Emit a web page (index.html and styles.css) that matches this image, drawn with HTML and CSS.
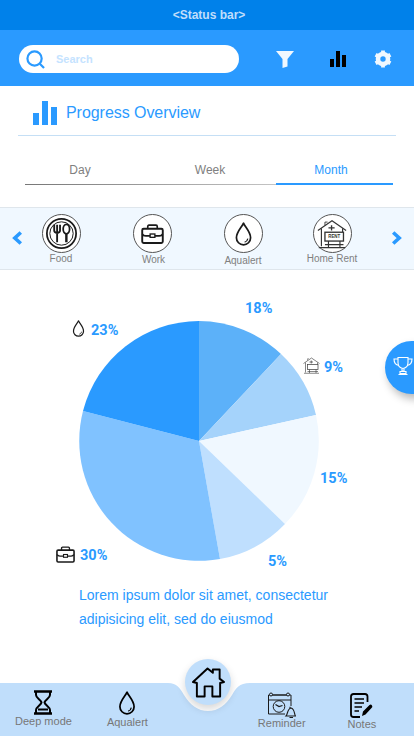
FILE: index.html
```html
<!DOCTYPE html>
<html lang="en">
<head>
<meta charset="utf-8">
<title>Progress Overview</title>
<link rel="stylesheet" href="styles.css">
</head>
<body>
<svg class="defs" width="0" height="0" aria-hidden="true">
  <symbol id="i-drop" viewBox="1.500 0.500 21 30.500">
    <path d="M12 2C10 7 3 13 3 20.500A9 9 0 0 0 21 20.500C21 13 14 7 12 2Z" fill="none" stroke="currentColor" stroke-width="2.200" stroke-linejoin="round"/>
    <path d="M17.500 21.500C17 24 15.500 25.500 13.500 26" fill="none" stroke="currentColor" stroke-width="1.500"/>
  </symbol>
  <symbol id="i-case" viewBox="0 0 24 21">
    <rect x="1.200" y="5" width="21.600" height="15" rx="1.500" fill="none" stroke="currentColor" stroke-width="2"/>
    <path d="M7 5V2.500Q7 1.200 8.300 1.200H15.700Q17 1.200 17 2.500V5" fill="none" stroke="currentColor" stroke-width="1.700"/>
    <path d="M1.500 10.500Q2 12.500 5 12.500H9.500M14.500 12.500H19Q22 12.500 22.500 10.500" fill="none" stroke="currentColor" stroke-width="1.700"/>
    <rect x="9.500" y="10.500" width="5" height="3.500" fill="none" stroke="currentColor" stroke-width="1.400"/>
  </symbol>
  <symbol id="i-rent" viewBox="0 0 34 34">
    <path d="M1 13L17 2L33 13M5 11V31M29 11V15" fill="none" stroke="currentColor" stroke-width="1.300"/>
    <path d="M9 7V3.500H12" fill="none" stroke="currentColor" stroke-width="1"/>
    <path d="M13 10H20M16.500 7V13" fill="none" stroke="currentColor" stroke-width="1.500"/>
    <rect x="9" y="15" width="21" height="10" fill="#fff" stroke="currentColor" stroke-width="1.500"/>
    <path d="M13 25V32M26 25V32M9 29H30M2 32.500H32" fill="none" stroke="currentColor" stroke-width="1.300"/>
  </symbol>
</svg>

<div class="page">
  <div class="status">&lt;Status bar&gt;</div>

  <header class="topbar">
    <div class="search">
      <svg class="search-icon" viewBox="0 0 20 20"><circle cx="9" cy="9" r="7.500" fill="none" stroke="#2a9aff" stroke-width="2.300"/><path d="M14.500 14.500L19 19" stroke="#2a9aff" stroke-width="2.300"/></svg>
      <span class="search-text">Search</span>
    </div>
    <svg class="filter-icon" viewBox="0 0 18 17"><path d="M0 0H18L11.500 8V15.500L6.500 17V8Z" fill="#f0f8ff"/></svg>
    <svg class="bars-icon" viewBox="0 0 16 16"><path d="M0 8H4V16H0ZM6 0H10V16H6ZM12 4H16V16H12Z" fill="#000"/></svg>
    <svg class="gear-icon" viewBox="0 0 18 18">
      <circle cx="9" cy="9" r="5" fill="none" stroke="#f0f8ff" stroke-width="4.600"/>
      <path d="M9 0.500V4M9 14V17.500M1.600 4.750L4.700 6.500M13.300 11.500L16.400 13.250M1.600 13.250L4.700 11.500M13.300 6.500L16.400 4.750" stroke="#f0f8ff" stroke-width="3.800"/>
    </svg>
  </header>

  <section class="heading">
    <svg class="heading-icon" viewBox="0 0 24 24"><path d="M0 12H6V24H0ZM9 0H15V24H9ZM18 6H24V24H18Z" fill="#2a9aff"/></svg>
    <h1 class="heading-text">Progress Overview</h1>
  </section>

  <nav class="tabs">
    <span class="tab tab-day">Day</span>
    <span class="tab tab-week">Week</span>
    <span class="tab tab-month">Month</span>
  </nav>

  <section class="carousel">
    <svg class="chev" viewBox="0 0 11 14"><path d="M8.800 1.500L2.800 7L8.800 12.500" fill="none" stroke="#2a9aff" stroke-width="3.600"/></svg>
    <div class="cats">
      <div class="cat">
        <span class="disc">
          <svg class="disc-icon" viewBox="0 0 38 38">
            <circle cx="19" cy="19" r="15" fill="none" stroke="#1a1a1a" stroke-width="1.800"/>
            <circle cx="19" cy="19" r="12" fill="none" stroke="#1a1a1a" stroke-width="1"/>
            <path d="M11.500 10V16Q11.500 18 14.500 18.500Q17.500 18 17.500 16V10M14.500 10V28" fill="none" stroke="#1a1a1a" stroke-width="1.900"/>
            <ellipse cx="24" cy="14.500" rx="3.300" ry="4.800" fill="none" stroke="#1a1a1a" stroke-width="1.800"/>
            <path d="M24 19V28" stroke="#1a1a1a" stroke-width="2.500"/>
          </svg>
        </span>
        <span class="cat-label">Food</span>
      </div>
      <div class="cat">
        <span class="disc"><svg class="disc-case"><use href="#i-case"/></svg></span>
        <span class="cat-label cat-label-low">Work</span>
      </div>
      <div class="cat">
        <span class="disc"><svg class="disc-drop"><use href="#i-drop"/></svg></span>
        <span class="cat-label cat-label-lower">Aqualert</span>
      </div>
      <div class="cat cat-home">
        <span class="disc">
          <svg class="disc-rent" viewBox="0 0 34 34">
            <use href="#i-rent"/>
            <text class="rent-word" x="19.500" y="22">RENT</text>
          </svg>
        </span>
        <span class="cat-label">Home Rent</span>
      </div>
    </div>
    <svg class="chev chev-next" viewBox="0 0 11 14"><path d="M2.200 1.500L8.200 7L2.200 12.500" fill="none" stroke="#2a9aff" stroke-width="3.600"/></svg>
  </section>

  <section class="chart">
    <svg class="pie" width="414" height="310" viewBox="0 0 414 310">
      <path d="M199 171V51A120 120 0 0 1 281 84Z" fill="#5cb1f9"/>
      <path d="M199 171L281 84A120 120 0 0 1 316 145Z" fill="#a5d3fb"/>
      <path d="M199 171L316 145A120 120 0 0 1 285 254Z" fill="#f0f8ff"/>
      <path d="M199 171L285 254A120 120 0 0 1 220 289Z" fill="#bfdffe"/>
      <path d="M199 171L220 289A120 120 0 0 1 83 141Z" fill="#80c2ff"/>
      <path d="M199 171L83 141A120 120 0 0 1 199 51Z" fill="#2a9aff"/>
    </svg>
    <span class="pct pct-18">18%</span>
    <svg class="mark mark-drop"><use href="#i-drop"/></svg>
    <span class="pct pct-23">23%</span>
    <svg class="mark mark-rent"><use href="#i-rent"/></svg>
    <span class="pct pct-9">9%</span>
    <span class="pct pct-15">15%</span>
    <span class="pct pct-5">5%</span>
    <svg class="mark mark-case"><use href="#i-case"/></svg>
    <span class="pct pct-30">30%</span>
  </section>

  <p class="lorem">Lorem ipsum dolor sit amet, consectetur<br>adipisicing elit, sed do eiusmod</p>

  <button class="award" type="button" aria-label="Awards">
    <svg class="award-icon" viewBox="0 0 20 20">
      <path d="M5 1.500H15V6.500C15 10 13 12 10 12.500C7 12 5 10 5 6.500Z" fill="none" stroke="#fff" stroke-width="1.100"/>
      <path d="M5 3H1C1 7 2.500 9 6 9.500M15 3H19C19 7 17.500 9 14 9.500" fill="none" stroke="#fff" stroke-width="1.100"/>
      <path d="M9 12.500V15H11V12.500M7 15.500H13V17.500H7ZM5.500 18.500H14.500" fill="none" stroke="#fff" stroke-width="1.100"/>
    </svg>
  </button>

  <footer class="bottom">
    <svg class="bottom-bg" viewBox="0 0 414 53" preserveAspectRatio="none"><path d="M0 0H168C177 0 180 5 184 12C190 22 198 28 208 28C218 28 226 22 232 12C236 5 239 0 250 0H414V53H0Z" fill="#c0defb"/></svg>
    <div class="tool tool-deep">
      <svg class="tool-hour" viewBox="0 0 20 25">
        <path d="M1 1.500H19M1 23.500H19" stroke="#000" stroke-width="2.400"/>
        <path d="M3 2V5C3 8 8 10 8.500 12.500C8 15 3 17 3 20V23M17 2V5C17 8 12 10 11.500 12.500C12 15 17 17 17 20V23M5 19.500H15" fill="none" stroke="#000" stroke-width="2"/>
      </svg>
      <span class="tool-label">Deep mode</span>
    </div>
    <div class="tool tool-aqua">
      <svg class="tool-drop"><use href="#i-drop"/></svg>
      <span class="tool-label tool-label-gap">Aqualert</span>
    </div>
    <div class="tool tool-remind">
      <svg class="tool-cal" viewBox="0 0 29 27">
        <path d="M18 22H1.500V3H24V14M1.500 8H24M4 3H20" fill="none" stroke="#1a1a1a" stroke-width="1"/>
        <circle cx="4" cy="2.500" r="1.500" fill="#c0defb" stroke="#1a1a1a"/>
        <circle cx="21" cy="2.500" r="1.500" fill="#c0defb" stroke="#1a1a1a"/>
        <circle cx="12" cy="14.500" r="5.800" fill="none" stroke="#1a1a1a" stroke-width="1"/>
        <path d="M8.500 12.500L12 14.500L15.500 13.500" fill="none" stroke="#1a1a1a" stroke-width="1.200"/>
        <path d="M19 24C21 22 20 17 24 16C28 17 27 22 28.500 24ZM23 16V14.800M22.500 25.500H26" fill="#c0defb" stroke="#1a1a1a" stroke-width="1.100"/>
      </svg>
      <span class="tool-label tool-label-tight">Reminder</span>
    </div>
    <div class="tool tool-notes">
      <svg class="tool-note" viewBox="0 0 23 25">
        <path d="M17.500 9V3.500Q17.500 1 15 1H3.500Q1 1 1 3.500V21.500Q1 24 3.500 24H10" fill="none" stroke="#000" stroke-width="1.800"/>
        <path d="M4.500 6H14M4.500 10H14M4.500 14H12M4.500 18H9" stroke="#000" stroke-width="1.300"/>
        <path d="M12 23L13 18.500L19.500 12Q21 11 22 12.500Q23 14 21.500 15L15.500 21.500Z" fill="#000"/>
      </svg>
      <span class="tool-label">Notes</span>
    </div>
    <button class="home" type="button" aria-label="Home">
      <svg class="home-icon" viewBox="0 0 34 32">
        <path d="M1 15.500L16 1.500L21.500 6V2.500H28.500V12L33 15.500L29 16.500V30.500H21V20H13V30.500H5V16.500Z" fill="none" stroke="#000" stroke-width="2" stroke-linejoin="round"/>
      </svg>
    </button>
  </footer>
</div>
</body>
</html>
```

FILE: styles.css
```css
* { box-sizing: border-box; }
html, body { margin: 0; padding: 0; background: #fff; }
.defs { position: absolute; }
.page {
  position: relative;
  width: 414px;
  height: 736px;
  overflow: hidden;
  display: flex;
  flex-direction: column;
  font-family: "Liberation Sans", Arial, sans-serif;
  background: #fff;
}

.status {
  height: 30px;
  display: flex;
  align-items: center;
  justify-content: center;
  padding-left: 4px;
  background: #0081ea;
  color: #c0defb;
  font-size: 12px;
  font-weight: 700;
}

.topbar {
  height: 56px;
  display: flex;
  align-items: center;
  padding: 2px 0 0 19px;
  background: #2a9aff;
}
.search {
  width: 220px;
  height: 28px;
  display: flex;
  align-items: center;
  padding-left: 7px;
  border-radius: 14px;
  background: #fff;
}
.search-icon { width: 19px; height: 19px; }
.search-text {
  margin-left: 11px;
  color: #c5e3ff;
  font-size: 11px;
  font-weight: 700;
}
.filter-icon { width: 18px; height: 17px; margin-left: 37px; }
.bars-icon { width: 16px; height: 16px; margin-left: 36px; }
.gear-icon { width: 18px; height: 18px; margin-left: 28px; }

.heading {
  height: 50px;
  margin: 0 18px;
  display: flex;
  align-items: center;
  padding: 4px 0 0 15px;
  border-bottom: 1px solid #c5dff5;
}
.heading-icon { width: 24px; height: 24px; }
.heading-text {
  margin: 0 0 0 9px;
  color: #2a9aff;
  font-size: 16px;
  font-weight: 400;
  letter-spacing: -.05px;
}

.tabs {
  width: 368px;
  height: 26px;
  margin: 23px 0 0 25px;
  display: flex;
  font-size: 12px;
  background: linear-gradient(90deg, #777, #c4c4c4) left bottom / 251px 1px no-repeat;
  color: #808080;
}
.tab { display: block; text-align: center; line-height: 23px; }
.tab-day { width: 110px; }
.tab-week { width: 141px; padding-left: 9px; }
.tab-month {
  width: 117px;
  padding-right: 7px;
  color: #2a9aff;
  border-bottom: 2px solid #2a9aff;
}

.carousel {
  height: 63px;
  margin-top: 22px;
  display: flex;
  align-items: flex-start;
  padding: 0 12px;
  background: #f0f8ff;
  border-top: 1px solid #dfe6ec;
  border-bottom: 1px solid #dfe6ec;
}
.chev { width: 11px; height: 14px; margin-top: 23px; flex: none; }
.chev-next { margin-left: auto; }
.cats { display: flex; margin-left: 8px; gap: 31px; }
.cat {
  width: 60px;
  display: flex;
  flex-direction: column;
  align-items: center;
  padding-top: 6px;
}
.cat-home { margin-left: -2px; }
.disc {
  width: 39px;
  height: 39px;
  display: flex;
  align-items: center;
  justify-content: center;
  border: 1px solid #555;
  border-radius: 50%;
  background: #fff;
  color: #1a1a1a;
}
.disc-icon { width: 37px; height: 37px; }
.disc-case { width: 23px; height: 20px; }
.disc-drop { width: 17px; height: 24px; }
.disc-rent { width: 30px; height: 30px; color: #333; }
.rent-word { font: 700 5px "Liberation Sans", sans-serif; fill: #333; text-anchor: middle; }
.cat-label {
  color: #808080;
  font-size: 10px;
  line-height: 12px;
  white-space: nowrap;
}
.cat-label-low { margin-top: 1px; padding-left: 3px; }
.cat-label-lower { margin-top: 2px; }

.chart { position: relative; height: 310px; flex: none; }
.pie { display: block; }
.pct {
  position: absolute;
  color: #2a9aff;
  font-family: Roboto, "Liberation Sans", sans-serif;
  font-size: 14.500px;
  font-weight: 700;
  line-height: 18px;
}
.pct-18 { left: 245px; top: 30px; }
.pct-23 { left: 91px; top: 52px; }
.pct-9 { left: 324px; top: 89px; }
.pct-15 { left: 320px; top: 200px; }
.pct-5 { left: 268px; top: 283px; }
.pct-30 { left: 80px; top: 277px; }
.mark { position: absolute; color: #1a1a1a; }
.mark-drop { left: 72px; top: 50px; width: 13px; height: 17px; }
.mark-rent { left: 303px; top: 87px; width: 17px; height: 17px; color: #444; }
.mark-case { left: 56px; top: 276px; width: 19px; height: 17px; }

.lorem {
  margin: 3px 0 0;
  padding-left: 79px;
  color: #2a9aff;
  font-size: 14px;
  line-height: 24px;
}

.award {
  position: absolute;
  left: 385px;
  top: 341px;
  width: 53px;
  height: 53px;
  padding: 0 0 3px 8px;
  border: 0;
  border-radius: 50%;
  display: flex;
  align-items: center;
  background: #2a9aff;
  box-shadow: 3px 5px 8px rgba(0, 0, 0, .28);
}
.award-icon { width: 20px; height: 20px; }

.bottom {
  position: relative;
  height: 53px;
  margin-top: auto;
  display: flex;
  align-items: flex-start;
}
.bottom-bg { position: absolute; left: 0; top: 0; width: 100%; height: 100%; }
.tool {
  position: relative;
  display: flex;
  flex-direction: column;
  align-items: center;
  color: #000;
}
.tool-label {
  color: #777;
  font-size: 11px;
  line-height: 13px;
  white-space: nowrap;
}
.tool-label-gap { margin-top: 1px; }
.tool-label-tight { margin-top: -2px; }
.tool-deep { margin-left: 15px; padding-top: 7px; }
.tool-aqua { margin-left: 35px; padding-top: 8px; }
.tool-remind { margin-left: 110px; padding-top: 9px; }
.tool-notes { margin-left: 42px; padding-top: 10px; }
.tool-hour { width: 20px; height: 25px; }
.tool-drop { width: 18px; height: 24px; }
.tool-cal { width: 29px; height: 27px; }
.tool-note { width: 23px; height: 25px; }
.home {
  position: absolute;
  left: 185px;
  top: -24px;
  width: 46px;
  height: 46px;
  padding: 0;
  border: 0;
  border-radius: 50%;
  display: flex;
  align-items: center;
  justify-content: center;
  background: #c0defb;
  box-shadow: 0 4px 8px rgba(0, 0, 0, .16);
}
.home-icon { width: 33px; height: 31px; }
```
